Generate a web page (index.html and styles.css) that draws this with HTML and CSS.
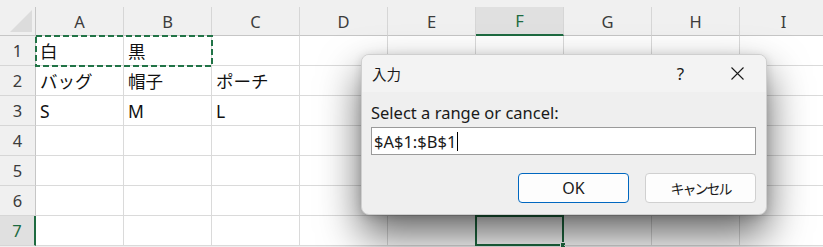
FILE: index.html
```html
<!DOCTYPE html>
<html lang="ja">
<head>
    <meta charset="UTF-8">
    <title>入力</title>
    <link rel="stylesheet" href="styles.css">
</head>
<body>
    <div class="window">
        <div class="sheet">
            <!-- header row -->
            <div class="corner"><span class="corner-tri"></span></div>
            <div class="col-head">A</div>
            <div class="col-head">B</div>
            <div class="col-head">C</div>
            <div class="col-head">D</div>
            <div class="col-head">E</div>
            <div class="col-head active">F</div>
            <div class="col-head">G</div>
            <div class="col-head">H</div>
            <div class="col-head">I</div>

            <div class="row-head">1</div>
            <div class="cell">白</div><div class="cell">黒</div><div class="cell"></div>
            <div class="cell"></div><div class="cell"></div><div class="cell"></div>
            <div class="cell"></div><div class="cell"></div><div class="cell"></div>

            <div class="row-head">2</div>
            <div class="cell">バッグ</div><div class="cell">帽子</div><div class="cell">ポーチ</div>
            <div class="cell"></div><div class="cell"></div><div class="cell"></div>
            <div class="cell"></div><div class="cell"></div><div class="cell"></div>

            <div class="row-head">3</div>
            <div class="cell">S</div><div class="cell">M</div><div class="cell">L</div>
            <div class="cell"></div><div class="cell"></div><div class="cell"></div>
            <div class="cell"></div><div class="cell"></div><div class="cell"></div>

            <div class="row-head">4</div>
            <div class="cell"></div><div class="cell"></div><div class="cell"></div>
            <div class="cell"></div><div class="cell"></div><div class="cell"></div>
            <div class="cell"></div><div class="cell"></div><div class="cell"></div>

            <div class="row-head">5</div>
            <div class="cell"></div><div class="cell"></div><div class="cell"></div>
            <div class="cell"></div><div class="cell"></div><div class="cell"></div>
            <div class="cell"></div><div class="cell"></div><div class="cell"></div>

            <div class="row-head">6</div>
            <div class="cell"></div><div class="cell"></div><div class="cell"></div>
            <div class="cell"></div><div class="cell"></div><div class="cell"></div>
            <div class="cell"></div><div class="cell"></div><div class="cell"></div>

            <div class="row-head active">7</div>
            <div class="cell"></div><div class="cell"></div><div class="cell"></div>
            <div class="cell"></div><div class="cell"></div><div class="cell selected"><span class="fill-handle"></span></div>
            <div class="cell"></div><div class="cell"></div><div class="cell"></div>
        </div>

        <!-- copy marquee around A1:B1 -->
        <svg class="marquee" width="178" height="32" viewBox="0 0 178 32">
            <rect x="1" y="1" width="176" height="30" fill="none" stroke="#217346" stroke-width="2" stroke-dasharray="6 3"/>
        </svg>

        <div class="dialog">
            <div class="dialog-title">
                <span class="title-text">入力</span>
                <span class="title-btn">?</span>
                <span class="title-btn">
                    <svg width="13" height="13" viewBox="0 0 13 13">
                        <path d="M0.5 0.5 L12.5 12.5 M12.5 0.5 L0.5 12.5" stroke="#1a1a1a" stroke-width="1.1" fill="none"/>
                    </svg>
                </span>
            </div>
            <div class="dialog-body">
                <div class="prompt">Select a range or cancel:</div>
                <div class="range-input">$A$1:$B$1<span class="caret"></span></div>
                <div class="dialog-actions">
                    <button class="btn btn-default">OK</button>
                    <button class="btn btn-kana">キャンセル</button>
                </div>
            </div>
        </div>
    </div>
</body>
</html>
```

FILE: styles.css
```css
:root {
    --excel-green: #1e6b41;
    --grid-line: #dadada;
    --head-line: #c6c6c6;
    --head-bg: #f0f0f0;
    --head-active: #e0e0e0;
    --ui-font: "Noto Sans", "Noto Sans CJK JP", sans-serif;
}

* {
    box-sizing: border-box;
}

body {
    margin: 0;
    background: #fff;
    font-family: var(--ui-font);
    overflow: hidden;
}

.window {
    position: relative;
    width: 823px;
    height: 247px;
    overflow: hidden;
    background: var(--head-bg);
    padding-top: 7px;
}

.sheet {
    display: grid;
    grid-template-columns: 36px repeat(9, 88px);
    grid-template-rows: 29px repeat(7, 30px);
    background: #fff;
}

.corner {
    background: var(--head-bg);
    border-right: 1px solid var(--head-line);
    border-bottom: 1px solid var(--head-line);
    display: flex;
    justify-content: flex-end;
    align-items: flex-end;
    padding: 0 3px 3px 0;
}

.corner-tri {
    width: 22px;
    height: 22px;
    background: #dcdcdc;
    clip-path: polygon(100% 0, 100% 100%, 0 100%);
}

.col-head,
.row-head {
    display: flex;
    align-items: center;
    justify-content: center;
    background: var(--head-bg);
    color: #3c3c3c;
    font-size: 16.5px;
}

.col-head {
    border-right: 1px solid #d6d6d6;
    border-bottom: 1px solid var(--head-line);
}

.row-head {
    border-right: 1px solid var(--head-line);
    border-bottom: 1px solid #d6d6d6;
}

.col-head.active {
    background: var(--head-active);
    color: var(--excel-green);
    border-bottom: 2px solid var(--excel-green);
}

.row-head.active {
    background: var(--head-active);
    color: var(--excel-green);
    border-right: 2px solid var(--excel-green);
}

.cell {
    position: relative;
    display: flex;
    align-items: center;
    padding-left: 4px;
    border-right: 1px solid var(--grid-line);
    border-bottom: 1px solid var(--grid-line);
    font-size: 17.5px;
    color: #111;
    white-space: nowrap;
}

.cell.selected {
    border: 2px solid var(--excel-green);
    margin: -1px 0 0 -1px;
}

.fill-handle {
    position: absolute;
    right: -4px;
    bottom: -4px;
    width: 6px;
    height: 6px;
    background: var(--excel-green);
    border: 1px solid #fff;
}

.marquee {
    position: absolute;
    left: 35px;
    top: 35px;
}

/* input dialog */
.dialog {
    position: absolute;
    left: 361px;
    top: 54px;
    width: 406px;
    height: 161px;
    background: #efefef;
    border: 1px solid #cfcfcf;
    border-radius: 8px;
    box-shadow: 0 20px 42px rgba(0, 0, 0, 0.6), 0 2px 10px rgba(0, 0, 0, 0.15);
    font-family: var(--ui-font);
    color: #1a1a1a;
    overflow: hidden;
}

.dialog-title {
    display: flex;
    align-items: center;
    height: 37px;
    background: #f3f3f3;
    padding-left: 10px;
    font-size: 14.5px;
}

.title-text {
    flex: 1;
}

.title-btn {
    width: 57px;
    display: flex;
    justify-content: center;
    align-items: center;
    font-size: 17px;
}

.dialog-body {
    padding: 9px 10px 0 9px;
}

.prompt {
    font-size: 16.5px;
    line-height: 23px;
}

.range-input {
    margin-top: 3px;
    height: 28px;
    background: #fff;
    border: 1px solid #9a9a9a;
    display: flex;
    align-items: center;
    padding-left: 2px;
    font-size: 16.5px;
}

.caret {
    display: inline-block;
    width: 1px;
    height: 19px;
    background: #000;
    margin-left: 1px;
}

.dialog-actions {
    display: flex;
    justify-content: flex-end;
    gap: 16px;
    margin-top: 18px;
}

.btn {
    width: 111px;
    height: 30px;
    background: #fdfdfd;
    border: 1px solid #d0d0d0;
    border-radius: 4px;
    font-family: var(--ui-font);
    font-size: 16px;
    color: #1a1a1a;
    padding: 0;
}

.btn-default {
    border-color: #0067c0;
}

.btn-kana {
    font-size: 14px;
    letter-spacing: -2px;
}
```
